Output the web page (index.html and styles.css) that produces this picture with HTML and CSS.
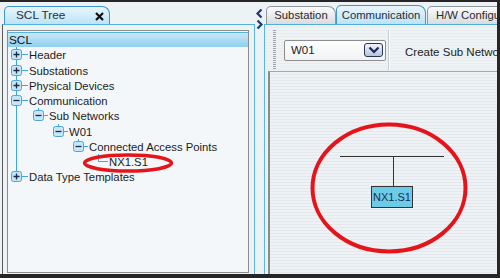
FILE: index.html
```html
<!DOCTYPE html>
<html>
<head>
<meta charset="utf-8">
<link rel="stylesheet" href="styles.css">
</head>
<body>
<div class="frame">
  <div class="left">
    <div class="tabbar">
      <div class="tab active scltab"><span>SCL Tree</span>
        <svg class="close" width="9" height="9" viewBox="0 0 9 9"><path d="M1 1L8 8M8 1L1 8" stroke="#111" stroke-width="2.2" fill="none"/></svg>
      </div>
    </div>
    <div class="pane lpane">
      <div class="treebox">
        <div class="tree">
          <div class="row root"><span class="label">SCL</span></div>
          <div class="row"><span class="cell c0 v own"><svg class="exp" width="11" height="11" viewBox="0 0 11 11"><rect x=".5" y=".5" width="10" height="10" rx="2" fill="#c6e6f6" stroke="#4ea6d6"/><path d="M2.5 5.5H8.5M5.5 2.5V8.5" stroke="#1b2a48" stroke-width="1.3"/></svg></span><span class="label">Header</span></div>
          <div class="row"><span class="cell c0 v own"><svg class="exp" width="11" height="11" viewBox="0 0 11 11"><rect x=".5" y=".5" width="10" height="10" rx="2" fill="#c6e6f6" stroke="#4ea6d6"/><path d="M2.5 5.5H8.5M5.5 2.5V8.5" stroke="#1b2a48" stroke-width="1.3"/></svg></span><span class="label">Substations</span></div>
          <div class="row"><span class="cell c0 v own"><svg class="exp" width="11" height="11" viewBox="0 0 11 11"><rect x=".5" y=".5" width="10" height="10" rx="2" fill="#c6e6f6" stroke="#4ea6d6"/><path d="M2.5 5.5H8.5M5.5 2.5V8.5" stroke="#1b2a48" stroke-width="1.3"/></svg></span><span class="label">Physical Devices</span></div>
          <div class="row"><span class="cell c0 v own"><svg class="exp" width="11" height="11" viewBox="0 0 11 11"><rect x=".5" y=".5" width="10" height="10" rx="2" fill="#c6e6f6" stroke="#4ea6d6"/><path d="M2.5 5.5H8.5" stroke="#1b2a48" stroke-width="1.3"/></svg></span><span class="label">Communication</span></div>
          <div class="row"><span class="cell c0 v"></span><span class="cell up own"><svg class="exp" width="11" height="11" viewBox="0 0 11 11"><rect x=".5" y=".5" width="10" height="10" rx="2" fill="#c6e6f6" stroke="#4ea6d6"/><path d="M2.5 5.5H8.5" stroke="#1b2a48" stroke-width="1.3"/></svg></span><span class="label">Sub Networks</span></div>
          <div class="row"><span class="cell c0 v"></span><span class="cell"></span><span class="cell up own"><svg class="exp" width="11" height="11" viewBox="0 0 11 11"><rect x=".5" y=".5" width="10" height="10" rx="2" fill="#c6e6f6" stroke="#4ea6d6"/><path d="M2.5 5.5H8.5" stroke="#1b2a48" stroke-width="1.3"/></svg></span><span class="label">W01</span></div>
          <div class="row"><span class="cell c0 v"></span><span class="cell"></span><span class="cell"></span><span class="cell up own"><svg class="exp" width="11" height="11" viewBox="0 0 11 11"><rect x=".5" y=".5" width="10" height="10" rx="2" fill="#c6e6f6" stroke="#4ea6d6"/><path d="M2.5 5.5H8.5" stroke="#1b2a48" stroke-width="1.3"/></svg></span><span class="label">Connected Access Points</span></div>
          <div class="row"><span class="cell c0 v"></span><span class="cell"></span><span class="cell"></span><span class="cell"></span><span class="cell up own"></span><span class="label">NX1.S1</span></div>
          <div class="row"><span class="cell c0 up own"><svg class="exp" width="11" height="11" viewBox="0 0 11 11"><rect x=".5" y=".5" width="10" height="10" rx="2" fill="#c6e6f6" stroke="#4ea6d6"/><path d="M2.5 5.5H8.5M5.5 2.5V8.5" stroke="#1b2a48" stroke-width="1.3"/></svg></span><span class="label">Data Type Templates</span></div>
        </div>
        <svg class="mark" width="240" height="240" viewBox="0 0 240 240"><ellipse cx="120" cy="132" rx="43.5" ry="8" fill="none" stroke="#e5141b" stroke-width="3.5"/></svg>
      </div>
    </div>
  </div>

  <div class="splitter">
    <svg width="9" height="30" viewBox="0 0 9 30"><path d="M6.5 7.5L2.5 11.5L6.5 15.5M2.5 18.5L6.5 22.5L2.5 26.5" stroke="#1c3b7a" stroke-width="2.2" fill="none"/></svg>
  </div>

  <div class="right">
    <div class="tabbar rtabs">
      <div class="tab sub">Substation</div>
      <div class="tab active comm">Communication</div>
      <div class="tab hw">H/W Configuration</div>
    </div>
    <div class="pane rpane">
      <div class="toolbar">
        <div class="grip"></div>
        <div class="combo"><span class="combo-text">W01</span>
          <span class="combo-btn"><svg width="12" height="8" viewBox="0 0 12 8"><path d="M1.5 1.5L6 6L10.5 1.5" stroke="#1b2a5e" stroke-width="2.2" fill="none"/></svg></span>
        </div>
        <div class="sep"></div>
        <div class="tool-text">Create Sub Network</div>
      </div>
      <div class="canvas">
        <div class="bus"></div>
        <div class="drop"></div>
        <div class="node">NX1.S1</div>
        <svg class="bigmark" width="170" height="140" viewBox="0 0 170 140"><ellipse cx="85" cy="70" rx="76.5" ry="63.5" fill="none" stroke="#e5141b" stroke-width="4"/></svg>
      </div>
    </div>
  </div>
</div>
</body>
</html>
```

FILE: styles.css
```css
* { box-sizing: border-box; }
html, body { margin: 0; padding: 0; }
body {
  width: 500px;
  height: 278px;
  overflow: hidden;
  font-family: "Liberation Sans", Arial, sans-serif;
  font-size: 11px;
  color: #1e1e1e;
  background: #edf2f5;
}
.frame {
  width: 500px;
  height: 278px;
  border-top: 2px solid #262626;
  border-right: 3px solid #262626;
  border-bottom: 4px solid #262626;
  background: #edf2f5;
  display: flex;
}
.left {
  width: 253px;
  margin-left: 2px;
  display: flex;
  flex-direction: column;
}
.tabbar {
  height: 22px;
  display: flex;
  align-items: flex-end;
  flex: none;
  white-space: nowrap;
  overflow: hidden;
}
.tab {
  height: 18px;
  border: 1px solid #8e979f;
  border-bottom: none;
  border-radius: 5px 8px 0 0;
  background: linear-gradient(#fbfbfb, #d9dcdf);
  line-height: 17px;
  padding: 0 8px;
  color: #2a2a2a;
  font-size: 11.3px;
  flex: none;
}
.tab.active {
  border-color: #3b98d4;
  background: linear-gradient(#e9f6fc, #bde3f5);
  color: #1d2f44;
}
.scltab {
  margin-left: 2px;
  width: 106px;
  padding: 0 5px 0 11px;
  display: flex;
  align-items: center;
  justify-content: space-between;
  font-size: 11.8px;
}
.close { display: block; margin-top: 1px; }
.pane {
  flex: 1;
  border-top: 1px solid #4fb0e0;
}
.lpane {
  border-left: 1px solid #5a5a5a;
  border-right: 1px solid #58b6e6;
  padding: 5px 5px 1px 4px;
  display: flex;
}
.treebox {
  flex: 1;
  border: 1px solid #8c8c8c;
  background: #f3f7fa;
  position: relative;
  overflow: hidden;
}
.tree { padding-top: 1px; }
.row {
  height: 15.25px;
  display: flex;
  align-items: stretch;
}
.row.root {
  background: linear-gradient(#c9e8f7, #8fcfee);
  border-top: 1px solid #57b4e2;
}
.label {
  display: flex;
  align-items: center;
  margin-left: 1px;
  padding-top: 1px;
  white-space: nowrap;
  color: #1c1c1c;
  font-size: 11.3px;
}
.root .label { margin-left: 1px; padding-top: 0; color: #111; font-size: 11.8px; }
.cell {
  width: 20px;
  flex: none;
  display: flex;
  align-items: center;
  justify-content: flex-start;
  background-repeat: no-repeat;
}
.exp { display: block; margin-left: 5px; }
.c0 .exp { margin-left: 3px; }
/* connector lines */
.cell.v { background-image: linear-gradient(#3aa9e2, #3aa9e2); background-size: 1px 100%; background-position: 10px 0; }
.cell.up { background-image: linear-gradient(#3aa9e2, #3aa9e2); background-size: 1px 50%; background-position: 10px 0; }
.cell.own.v { background-image: linear-gradient(#3aa9e2, #3aa9e2), linear-gradient(#3aa9e2, #3aa9e2); background-size: 1px 100%, 10px 1px; background-position: 10px 0, 10px 50%; }
.cell.own.up { background-image: linear-gradient(#3aa9e2, #3aa9e2), linear-gradient(#3aa9e2, #3aa9e2); background-size: 1px 50%, 10px 1px; background-position: 10px 0, 10px 50%; }
.cell.c0.v { background-position: 8px 0; }
.cell.c0.up { background-position: 8px 0; }
.cell.c0.own.v, .cell.c0.own.up { background-position: 8px 0, 8px 50%; background-size: 1px 100%, 12px 1px; }
.cell.c0.own.up { background-size: 1px 50%, 12px 1px; }
.mark {
  position: absolute;
  left: 0;
  top: 0;
  pointer-events: none;
}
.splitter {
  width: 9px;
  flex: none;
}
.splitter svg { display: block; }
.right {
  width: 233px;
  display: flex;
  flex-direction: column;
  overflow: hidden;
}
.rtabs { padding-left: 2px; }
.sub { width: 70px; text-align: center; padding: 0; }
.comm { width: 90px; height: 19px; text-align: center; padding: 0; line-height: 18px; }
.hw { margin-left: 1px; padding-left: 8px; }
.rpane {
  border-left: 1px solid #58b6e6;
  display: flex;
  flex-direction: column;
}
.toolbar {
  height: 46px;
  flex: none;
  display: flex;
  align-items: center;
  padding-top: 4px;
  padding-left: 8px;
  background: repeating-linear-gradient(#eef2f5 0 2px, #e8edf0 2px 3px);
  white-space: nowrap;
}
.grip {
  width: 3px;
  height: 40px;
  background: repeating-linear-gradient(#9fa5aa 0 1px, transparent 1px 2px);
  flex: none;
}
.combo {
  margin-left: 8px;
  width: 102px;
  height: 21px;
  border: 1px solid #8d8d8d;
  border-radius: 2px;
  background: linear-gradient(#fdfdfd, #f1f3f5);
  display: flex;
  align-items: center;
  justify-content: space-between;
  padding: 0 2px 0 6px;
  flex: none;
}
.combo-text { color: #1c1c1c; font-size: 11.5px; }
.combo-btn {
  width: 19px;
  height: 14px;
  border: 1px solid #2b3355;
  border-radius: 3px;
  background: linear-gradient(#f2f5fa, #b7c4dc);
  display: flex;
  align-items: center;
  justify-content: center;
}
.combo-btn svg { display: block; }
.sep {
  width: 2px;
  height: 40px;
  margin-left: 2px;
  border-left: 1px solid #c5cbd0;
  border-right: 1px solid #fbfcfd;
  flex: none;
}
.tool-text {
  margin-left: 15px;
  margin-top: 3px;
  color: #222;
  font-size: 11.5px;
}
.canvas {
  flex: 1;
  margin-left: 3px;
  border-top: 1px solid #a3a8ac;
  border-left: 2px solid #8a8a8a;
  background: repeating-linear-gradient(#eef2f5 0 2px, #e3e8ec 2px 3px);
  position: relative;
  overflow: hidden;
}
.bus {
  position: absolute;
  left: 70px;
  top: 84px;
  width: 104px;
  height: 1px;
  background: #333;
}
.drop {
  position: absolute;
  left: 123px;
  top: 84px;
  width: 1px;
  height: 30px;
  background: #333;
}
.node {
  position: absolute;
  left: 101px;
  top: 114px;
  width: 42px;
  height: 22px;
  border: 1px solid #333;
  background: #6ecbe8;
  color: #1c2f48;
  font-size: 11px;
  line-height: 20px;
  text-align: center;
}
.bigmark {
  position: absolute;
  left: 34px;
  top: 46px;
}
```
